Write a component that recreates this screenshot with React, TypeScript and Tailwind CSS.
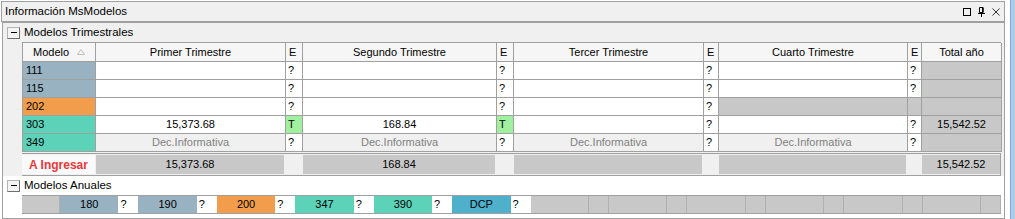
const COLS = "grid-cols-[73px_190px_17px_194px_17px_190px_15px_189px_14px_80px]";

const BLUEGRAY = "bg-[#98b2c2]";
const ORANGE = "bg-[#f29d4b]";
const TEAL = "bg-[#5cd2b8]";
const GRAY = "bg-[#c8c8c8]";

type Cell = { text?: string; cls: string };

const w = (text = ""): Cell => ({ text, cls: "bg-white justify-center" });
const q = (): Cell => ({ text: "?", cls: "bg-white pl-[2px]" });
const g = (text = ""): Cell => ({ text, cls: `${GRAY} justify-center` });
const t = (): Cell => ({ text: "T", cls: "bg-[#a0f0a0] pl-[2px]" });
const dec = (): Cell => ({ text: "Dec.Informativa", cls: "bg-[#f0f0f0] text-[#808080] justify-center" });
const m = (text: string, color: string): Cell => ({ text, cls: `${color} pl-[3px]` });

const rows: Cell[][] = [
  [m("111", BLUEGRAY), w(), q(), w(), q(), w(), q(), w(), q(), g()],
  [m("115", BLUEGRAY), w(), q(), w(), q(), w(), q(), w(), q(), g()],
  [m("202", ORANGE), w(), q(), w(), q(), w(), q(), g(), g(), g()],
  [m("303", TEAL), w("15,373.68"), t(), w("168.84"), t(), w(), q(), w(), q(), g("15,542.52")],
  [m("349", TEAL), dec(), q(), dec(), q(), dec(), q(), dec(), q(), g()],
];

const headers = ["Primer Trimestre", "E", "Segundo Trimestre", "E", "Tercer Trimestre", "E", "Cuarto Trimestre", "E", "Total año"];

const anuales: { label: string; color: string }[] = [
  { label: "180", color: BLUEGRAY },
  { label: "190", color: BLUEGRAY },
  { label: "200", color: ORANGE },
  { label: "347", color: TEAL },
  { label: "390", color: TEAL },
  { label: "DCP", color: "bg-[#4eb0ca]" },
  { label: "", color: GRAY },
  { label: "", color: GRAY },
  { label: "", color: GRAY },
  { label: "", color: GRAY },
  { label: "", color: GRAY },
  { label: "", color: GRAY },
];

function Collapse() {
  return (
    <div className="w-[13px] h-[12px] border border-[#b4b4b4] border-r-[#6e6e6e] border-b-[#6e6e6e] bg-[#f4f4f4] flex items-center justify-center">
      <div className="w-[6px] h-[1px] bg-black" />
    </div>
  );
}

function GroupHeader({ title }: { title: string }) {
  return (
    <div className="h-[19px] flex items-center gap-[4px] pl-[4px] text-[11.5px]">
      <Collapse />
      <span>{title}</span>
    </div>
  );
}

export default function App() {
  return (
    <div
      className="w-[1015px] h-[219px] flex bg-white overflow-hidden text-[11px] text-black leading-none"
      style={{ fontFamily: '"Liberation Sans", Arial, sans-serif' }}
    >
      <div className="w-[1007px] flex flex-col">
        {/* title bar */}
        <div className="h-[21px] mt-[1px] ml-[1px] mr-[2px] border border-[#a0a0a0] bg-[#f0f0f0] flex items-center justify-between pl-[3px] pr-[4px]">
          <span className="text-[11.5px]">Información MsModelos</span>
          <div className="flex items-center gap-[7px]">
            <svg width="8" height="8" viewBox="0 0 8 8">
              <rect x="0.5" y="0.5" width="7" height="7" fill="none" stroke="#000" />
            </svg>
            <svg width="7" height="10" viewBox="0 0 7 10">
              <path d="M1.5 0.5h3.5v5H1.5z" fill="none" stroke="#000" />
              <rect x="4" y="0.5" width="1.5" height="5" fill="#000" />
              <path d="M0 6.5h7M3.5 6.5V10" stroke="#000" />
            </svg>
            <svg width="8" height="8" viewBox="0 0 8 8">
              <path d="M0.5 0.5l7 7M7.5 0.5l-7 7" stroke="#333" />
            </svg>
          </div>
        </div>

        {/* panel */}
        <div className="flex-1 ml-[2px] mr-[2px] border border-[#a0a0a0] flex flex-col">
          <div className="bg-[#f0f0f0] flex flex-col">
            <GroupHeader title="Modelos Trimestrales" />
            <div className="pl-[19px]">
              <div className={`grid ${COLS} w-[979px] border-l border-t border-[#a0a0a0]`}>
                <div className="h-[19px] bg-[#f6f6f6] border-r border-b border-[#a0a0a0] flex items-center pl-[10px] pr-[10px] justify-between">
                  <span>Modelo</span>
                  <svg width="8" height="6" viewBox="0 0 8 6">
                    <path d="M4 0.5L7.5 5.5H0.5z" fill="none" stroke="#c0c0c0" />
                  </svg>
                </div>
                {headers.map((h, i) => (
                  <div
                    key={i}
                    className={`h-[19px] bg-[#f6f6f6] border-r border-b border-[#a0a0a0] flex items-center ${h === "E" ? "pl-[3px]" : "justify-center"}`}
                  >
                    {h}
                  </div>
                ))}
                {rows.map((r, ri) =>
                  r.map((c, ci) => (
                    <div key={`${ri}-${ci}`} className={`h-[18px] border-r border-b border-[#a0a0a0] flex items-center ${c.cls}`}>
                      {c.text}
                    </div>
                  ))
                )}
              </div>

              {/* totals */}
              <div className={`grid ${COLS} w-[979px] mt-[1px] border-t border-b border-r border-[#a0a0a0] py-[1px]`}>
                <div className="h-[19px] bg-[#fafafa] flex items-center justify-center font-bold text-[12px] text-[#e8383c]">
                  A Ingresar
                </div>
                {["15,373.68", "", "168.84", "", "", "", "", "", "15,542.52"].map((v, i) => (
                  <div key={i} className="h-[19px] px-[1px]">
                    {i % 2 === 0 ? (
                      <div className={`h-full ${GRAY} flex items-center justify-center`}>{v}</div>
                    ) : (
                      <div className="h-full bg-[#f0f0f0]" />
                    )}
                  </div>
                ))}
              </div>
            </div>
          </div>

          <div className="bg-white flex-1 flex flex-col">
            <GroupHeader title="Modelos Anuales" />
            <div className="pl-[19px]">
              <div className="flex w-[979px] h-[19px] border-t border-b border-[#a0a0a0]">
                <div className={`w-[38px] ${GRAY} border-r border-[#b0b0b0]`} />
                {anuales.map((a, i) => (
                  <div key={i} className="flex-1 flex">
                    <div className={`flex-1 ${a.color} flex items-center justify-center ${a.label ? "" : "border-r border-[#b0b0b0]"}`}>
                      {a.label}
                    </div>
                    {a.label ? (
                      <div className="w-[20px] bg-white flex items-center pl-[2px]">?</div>
                    ) : (
                      <div className={`w-[20px] ${GRAY} border-r border-[#b0b0b0]`} />
                    )}
                  </div>
                ))}
              </div>
            </div>
          </div>
        </div>
      </div>

      {/* window edge */}
      <div className="flex-1 flex">
        <div className="w-[3px] bg-white" />
        <div className="flex-1 bg-[#aecbea] border-l border-[#7ea8d6]" />
      </div>
    </div>
  );
}
